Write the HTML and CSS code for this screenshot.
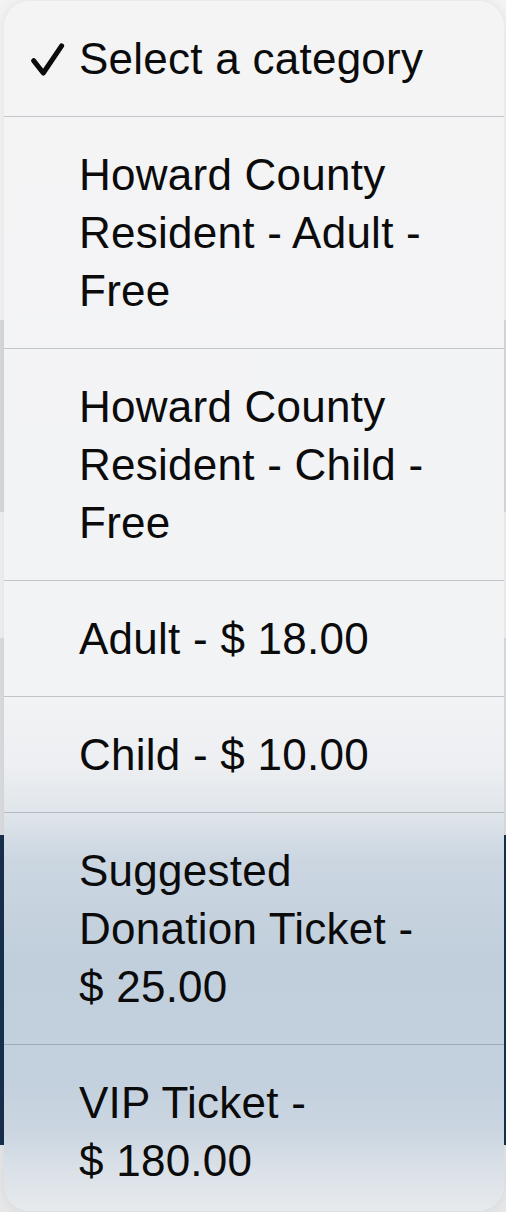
FILE: index.html
```html
<!DOCTYPE html>
<html lang="en">
<head>
    <meta charset="UTF-8">
    <meta name="viewport" content="width=device-width, initial-scale=1.0">
    <title>Select a category</title>
    <link rel="stylesheet" href="styles.css">
</head>
<body>
    <!-- page behind the picker, only its edges show -->
    <div class="page">
        <div class="band band-top"></div>
        <div class="band band-grey"></div>
        <div class="band band-light"></div>
        <div class="band band-mid"></div>
        <div class="band band-navy"></div>
        <div class="band band-bottom"></div>
    </div>

    <div class="picker">
        <ul class="options">
            <li class="option selected">
                <span class="mark">
                    <svg width="40" height="58" viewBox="0 0 40 58">
                        <path d="M5.6 30.6 L15.3 43 L33.6 15.8" fill="none" stroke="#0b0b0c" stroke-width="5" stroke-linecap="round" stroke-linejoin="round"/>
                    </svg>
                </span>
                <span class="label">Select a category</span>
            </li>
            <li class="option">
                <span class="mark"></span>
                <span class="label">Howard County Resident - Adult - Free</span>
            </li>
            <li class="option">
                <span class="mark"></span>
                <span class="label">Howard County Resident - Child - Free</span>
            </li>
            <li class="option">
                <span class="mark"></span>
                <span class="label">Adult - $&nbsp;18.00</span>
            </li>
            <li class="option">
                <span class="mark"></span>
                <span class="label">Child - $&nbsp;10.00</span>
            </li>
            <li class="option">
                <span class="mark"></span>
                <span class="label">Suggested Donation Ticket - $&nbsp;25.00</span>
            </li>
            <li class="option">
                <span class="mark"></span>
                <span class="label">VIP Ticket - $&nbsp;180.00</span>
            </li>
        </ul>
    </div>
</body>
</html>
```

FILE: styles.css
```css
/* Basic layout */
body {
    margin: 0;
    padding: 0;
    font-family: "Liberation Sans", Arial, sans-serif;
    background-color: #f2f2f3;
    overflow: hidden;
}
.page {
    display: flex;
    flex-direction: column;
    height: 1212px;
}
.band-top {
    height: 320px;
    background: #f3f3f4;
}
.band-grey {
    height: 192px;
    background: #d9dadc;
}
.band-light {
    height: 126px;
    background: #f1f1f2;
}
.band-mid {
    height: 197px;
    background: #dcdde0;
}
.band-navy {
    height: 310px;
    background: #17304d;
}
.band-bottom {
    flex: 1;
    background: #e6e7e9;
}

/* Picker sheet, frosted over the page */
.picker {
    position: absolute;
    top: 1px;
    left: 4px;
    width: 500px;
    height: 1210px;
    border-radius: 26px;
    overflow: hidden;
    background: linear-gradient(to bottom,
        #f4f4f5 0px,
        #f2f3f5 690px,
        #edeff2 765px,
        #dfe5ea 812px,
        #cbd6e1 860px,
        #c1cfdc 960px,
        #c3d0dd 1080px,
        #cbd6e1 1130px,
        #dce2e8 1175px,
        #e7eaed 1210px);
    box-shadow: 0 0 12px rgba(0, 0, 0, 0.08);
}
.options {
    list-style: none;
    margin: 0;
    padding: 0;
}
.option {
    display: flex;
    align-items: flex-start;
    padding: 29px 50px 28px 0;
    border-bottom: 1px solid rgba(55, 65, 80, 0.26);
    color: #0b0b0c;
    font-size: 44px;
    line-height: 58px;
    letter-spacing: 0.25px;
}
.option:last-child {
    border-bottom: none;
}
.mark {
    flex: none;
    width: 75px;
    height: 58px;
}
.mark svg {
    display: block;
    margin-left: 24px;
}
.label {
    flex: 1;
}
```
